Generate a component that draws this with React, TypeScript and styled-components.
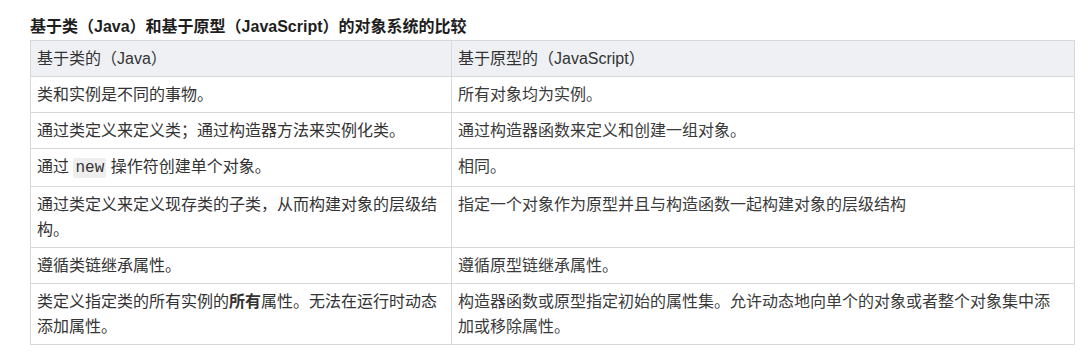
import styled, { createGlobalStyle } from "styled-components"

const GlobalStyle = createGlobalStyle`
	body {
		margin: 0;
		background: #ffffff;
		font-family: "Liberation Sans", "Noto Sans CJK SC", sans-serif;
		color: #333333;
	}
`

const Page = styled.div`
	padding: 14px 15px 0 30px;
`

const Table = styled.table`
	width: 1044px;
	border-collapse: collapse;
	table-layout: fixed;
	font-size: 16px;
	line-height: 25px;
`

const Caption = styled.caption`
	caption-side: top;
	text-align: left;
	font-weight: 700;
	color: #1e1e1e;
	padding-bottom: 1px;
`

const HeadCell = styled.th`
	background: #eef0f3;
	border: 1px solid #d6d8db;
	padding: 5px 12px 5px 6px;
	text-align: left;
	font-weight: 400;
	vertical-align: top;
`

const Cell = styled.td`
	border: 1px solid #d6d8db;
	padding: 5px 12px 5px 6px;
	vertical-align: top;
	color: ${(p: { $light?: boolean }) => (p.$light ? "#3a3a3a" : "#333333")};
`

const Code = styled.code`
	font-family: "Liberation Mono", "DejaVu Sans Mono", monospace;
	font-size: 16px;
	background: #eeeeee;
	padding: 1px 2px;
	border-radius: 2px;
`

const rows: [React.ReactNode, React.ReactNode][] = [
	["类和实例是不同的事物。", "所有对象均为实例。"],
	["通过类定义来定义类；通过构造器方法来实例化类。", "通过构造器函数来定义和创建一组对象。"],
	[
		<>
			通过 <Code>new</Code> 操作符创建单个对象。
		</>,
		"相同。",
	],
	["通过类定义来定义现存类的子类，从而构建对象的层级结构。", "指定一个对象作为原型并且与构造函数一起构建对象的层级结构"],
	["遵循类链继承属性。", "遵循原型链继承属性。"],
	[
		<>
			类定义指定类的所有实例的<strong>所有</strong>属性。无法在运行时动态添加属性。
		</>,
		"构造器函数或原型指定初始的属性集。允许动态地向单个的对象或者整个对象集中添加或移除属性。",
	],
]

export default function App() {
	return (
		<Page>
			<GlobalStyle />
			<Table>
				<Caption>基于类（Java）和基于原型（JavaScript）的对象系统的比较</Caption>
				<colgroup>
					<col style={{ width: 421 }} />
					<col style={{ width: 623 }} />
				</colgroup>
				<thead>
					<tr>
						<HeadCell>基于类的（Java）</HeadCell>
						<HeadCell>基于原型的（JavaScript）</HeadCell>
					</tr>
				</thead>
				<tbody>
					{rows.map(([left, right], index) => (
						<tr key={index}>
							<Cell>{left}</Cell>
							<Cell $light>{right}</Cell>
						</tr>
					))}
				</tbody>
			</Table>
		</Page>
	)
}
